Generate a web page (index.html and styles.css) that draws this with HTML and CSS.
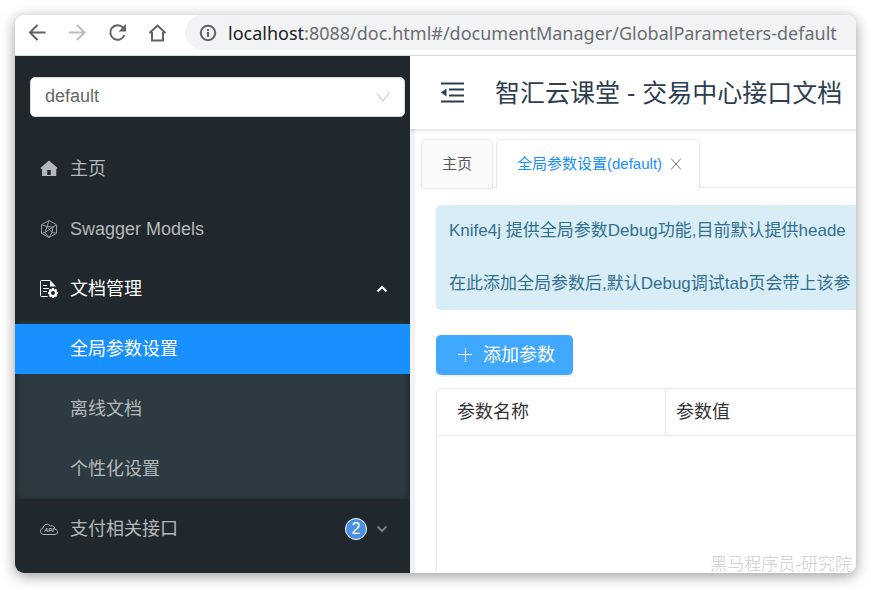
FILE: index.html
```html
<!DOCTYPE html>
<html lang="zh-CN">
<head>
<meta charset="utf-8">
<title>智汇云课堂 - 交易中心接口文档</title>
<link rel="stylesheet" href="styles.css">
</head>
<body>
<div class="window">
  <header class="browser-bar">
    <button class="nav-btn" type="button" aria-label="Back">
      <svg width="20" height="20" viewBox="0 0 20 20"><path d="M18.500 9.500H3M10.500 2L3 9.500l7.500 7.500"/></svg>
    </button>
    <button class="nav-btn nav-btn-off" type="button" aria-label="Forward" disabled>
      <svg width="20" height="20" viewBox="0 0 20 20"><path d="M2 9.500h15.500M10 2l7.500 7.500L10 17"/></svg>
    </button>
    <button class="nav-btn" type="button" aria-label="Reload">
      <svg width="20" height="20" viewBox="0 0 20 20"><path d="M17.500 12A7.300 7.300 0 1 1 16 4.500"/><path class="solid" d="M19 1v7.500h-7.500z"/></svg>
    </button>
    <button class="nav-btn" type="button" aria-label="Home">
      <svg width="20" height="20" viewBox="0 0 20 20"><path d="M2.500 10l8-7.500 8 7.500M5 9v8.500h11V9"/></svg>
    </button>
    <div class="address">
      <svg class="info" width="18" height="18" viewBox="0 0 18 18"><circle cx="9" cy="9" r="7.200"/><path d="M9 8v5M9 5v2"/></svg>
      <span class="url"><b>localhost</b>:8088/doc.html#/documentManager/GlobalParameters-default</span>
    </div>
  </header>

  <div class="app">
    <aside class="sider">
      <div class="group-select">
        <select aria-label="group"><option>default</option></select>
        <svg width="14" height="14" viewBox="0 0 14 14"><path d="M1 3l6 8 6-8"/></svg>
      </div>
      <nav>
        <ul class="menu">
          <li><a class="item" href="#home">
            <svg class="icon" width="20" height="20" viewBox="0 0 20 20"><path class="solid" fill-rule="evenodd" d="M10 1.500l8.300 7.300v1h-1V17H3V9.800H1.700v-1zM8.300 16h3.400v-5H8.300z"/></svg>
            <span>主页</span></a></li>
          <li><a class="item" href="#models">
            <svg class="icon thin" width="20" height="20" viewBox="0 0 20 20"><path d="M10 1.500l7.500 4.200v8.600L10 18.500l-7.500-4.200V5.700zM10 1.500L8 7.500 2.500 5.700M8 7.500l6 .5 3.500-2.300M14 8l-1 5.500 4.500.8M13 13.500l-3 5-4-5-3.500.8M6 13.500l2-6M6 13.500L14 8M8 7.500l5 6"/></svg>
            <span>Swagger Models</span></a></li>
          <li>
            <a class="item open" href="#docs">
              <svg class="icon" width="20" height="20" viewBox="0 0 20 20"><path d="M8.500 17.500H2.500Q1.500 17.500 1.500 16.500V2.500Q1.500 1.500 2.500 1.500H11M4 6.500h4M4 9.500h6M4 12.500h4"/><path class="solid" d="M11 1l6 6.500h-6z"/><circle cx="14" cy="14" r="3" stroke-width="2"/><path stroke-width="2" d="M14 9v2M14 17v2M9 14h2M17 14h2M10.500 10.500l1.500 1.500M16 16l1.500 1.500M17.500 10.500L16 12M12 16l-1.500 1.500"/></svg>
              <span>文档管理</span>
              <svg class="arrow" width="12" height="12" viewBox="0 0 12 12"><path d="M1.500 8.500L6 4l4.500 4.500"/></svg>
            </a>
            <ul class="submenu">
              <li><a class="item active" href="#global">全局参数设置</a></li>
              <li><a class="item" href="#offline">离线文档</a></li>
              <li><a class="item" href="#settings">个性化设置</a></li>
            </ul>
          </li>
          <li><a class="item" href="#pay">
            <svg class="icon api" width="20" height="20" viewBox="0 0 20 20"><path d="M5 15.500C.5 15.500.5 9.500 4 9.200c0-4 5.500-5.500 7.500-2 3-1 4.500 1 4.300 3 4 .6 3.500 5.300.2 5.300z"/><text x="5" y="13">API</text></svg>
            <span>支付相关接口</span>
            <span class="count">2</span>
            <svg class="arrow" width="12" height="12" viewBox="0 0 12 12"><path d="M1.500 3.500L6 8l4.500-4.500"/></svg>
          </a></li>
        </ul>
      </nav>
    </aside>

    <main class="main">
      <div class="topbar">
        <button class="fold" type="button" aria-label="Toggle menu">
          <svg width="24" height="24" viewBox="0 0 24 24"><path d="M1 2.500h23M9 8.500h15M9 14.500h15M1 20.500h23"/><path class="solid" d="M6.500 7.500v8L1 11.500z"/></svg>
        </button>
        <h1>智汇云课堂 - 交易中心接口文档</h1>
      </div>
      <div class="content">
        <div class="tabs" role="tablist">
          <button class="tab" type="button" role="tab">主页</button>
          <button class="tab current" type="button" role="tab" aria-selected="true">全局参数设置(default)
            <svg width="12" height="12" viewBox="0 0 12 12"><path d="M1 .5l10 11M11 .5l-10 11"/></svg>
          </button>
        </div>
        <div class="panel">
          <div class="notice">
            <p>Knife4j 提供全局参数Debug功能,目前默认提供heade</p>
            <p>在此添加全局参数后,默认Debug调试tab页会带上该参</p>
          </div>
          <button class="add" type="button">
            <svg width="16" height="16" viewBox="0 0 16 16"><path d="M8.500 1v14M1 7.500h14"/></svg>
            添加参数
          </button>
          <div class="table-box">
            <table>
              <thead><tr><th scope="col">参数名称</th><th scope="col">参数值</th></tr></thead>
            </table>
          </div>
        </div>
      </div>
      <div class="watermark">黑马程序员-研究院</div>
    </main>
  </div>
</div>
</body>
</html>
```
FILE: styles.css
```css
* { box-sizing: border-box; }

body {
  margin: 0;
  padding: 15px 15px 17px;
  height: 100vh;
  background: #fff;
  font: 18px/26px "Liberation Sans", "Noto Sans CJK SC", sans-serif;
}

h1, p, ul { margin: 0; padding: 0; }
ul { list-style: none; }
a { color: inherit; text-decoration: none; }
button { font: inherit; border: 0; background: none; padding: 0; cursor: pointer; }
svg { display: block; flex: none; fill: none; stroke: currentColor; }
.solid { fill: currentColor; stroke: none; }

.window {
  display: flex;
  flex-direction: column;
  height: 100%;
  border-radius: 9px;
  overflow: hidden;
  background: #fff;
  box-shadow: 0 3px 14px rgba(0, 0, 0, 0.4);
}

/* Browser toolbar */
.browser-bar {
  display: flex;
  flex: none;
  height: 41px;
  padding-left: 12px;
  padding-bottom: 5px;
  border-bottom: 1px solid #d9dadc;
  color: #5f6368;
}
.nav-btn { width: 20px; margin-right: 20px; color: #5f6368; }
.nav-btn svg { stroke-width: 2; }
.nav-btn-off { color: #bbbdc0; }
.address {
  display: flex;
  flex: 1;
  align-items: center;
  gap: 11px;
  min-width: 0;
  margin-left: -2px;
  padding-left: 14px;
  border-radius: 18px 0 0 18px;
  background: #f1f3f4;
}
.info { stroke-width: 2; }
.url { font: 18px/26px "Noto Sans", sans-serif; white-space: nowrap; color: #6b6e72; }
.url b { font-weight: 400; color: #202124; }

.app { display: flex; flex: 1; min-height: 0; }

/* Side menu */
.sider {
  flex: none;
  width: 395px;
  overflow: hidden;
  background: #20282d;
  color: #b5b8ba;
}
.group-select { display: grid; align-items: center; margin: 21px 5px 22px 15px; }
.group-select select, .group-select svg { grid-area: 1 / 1; }
.group-select select {
  appearance: none;
  width: 100%;
  height: 40px;
  padding: 0 14px 2px;
  border: 1px solid #d9d9d9;
  border-radius: 5px;
  background: #fff;
  color: #666;
  font: inherit;
}
.group-select svg { justify-self: end; margin-right: 15px; color: #bfbfbf; pointer-events: none; }

.menu li { display: flow-root; }
.item {
  display: flex;
  align-items: center;
  height: 50px;
  margin: 5px 0;
  padding: 0 22px 0 24px;
}
.icon { margin-right: 11px; stroke-width: 1; }
.thin { opacity: 0.8; }
.api text { font: italic bold 6px "Liberation Sans", sans-serif; fill: currentColor; stroke: none; }
.arrow { margin-left: auto; stroke-width: 2; }
.item .count + .arrow { margin-left: 9px; opacity: 0.6; }
.open { color: #fff; }
.count {
  width: 22px;
  height: 22px;
  margin-left: auto;
  border: 1px solid #fff;
  border-radius: 11px;
  background: #4a90e2;
  color: #fff;
  font-size: 16px;
  line-height: 20px;
  text-align: center;
}
.submenu {
  display: flow-root;
  background: #2c3b41;
  box-shadow: inset 0 2px 8px rgba(0, 0, 0, 0.45);
}
.submenu .item { padding-left: 55px; }
.submenu .active { background: #1890ff; color: #fff; }

/* Main column */
.main { display: flex; flex: 1; flex-direction: column; min-width: 0; position: relative; background: #f0f2f5; }
.topbar {
  display: flex;
  flex: none;
  align-items: center;
  gap: 31px;
  height: 73px;
  padding-left: 30px;
  background: #fff;
  color: #2c3e50;
  box-shadow: 0 2px 3px rgba(0, 21, 41, 0.12);
  z-index: 1;
}
.fold { color: #2c3e50; }
.fold svg { stroke-width: 2; }
h1 { font-size: 25px; line-height: 36px; font-weight: 400; white-space: nowrap; }
.content { flex: 1; min-height: 0; margin-left: 5px; padding: 10px 0 0 6px; overflow: hidden; background: #fff; }

.tabs { display: flex; gap: 3px; height: 49px; border-bottom: 1px solid #e8e8e8; }
.tab {
  display: flex;
  align-items: center;
  gap: 8px;
  height: 50px;
  padding: 0 20px;
  border: 1px solid #e8e8e8;
  border-radius: 5px 5px 0 0;
  background: #fafafa;
  color: #595959;
  font-size: 15px;
  white-space: nowrap;
}
.current { padding-right: 17px; border-bottom-color: #fff; background: #fff; color: #1890ff; }
.current svg { color: #777; }

.panel { padding: 17px 0 0 15px; }
.notice {
  display: grid;
  gap: 27px;
  padding: 13px 0 13px 13px;
  border-radius: 5px 0 0 5px;
  background: #d9edf7;
  color: #31708f;
  font-size: 17px;
  white-space: nowrap;
}
.add {
  display: flex;
  align-items: center;
  gap: 10px;
  height: 40px;
  margin: 25px 0 13px;
  padding: 0 18px 0 21px;
  border-radius: 5px;
  background: #40a9ff;
  color: #fff;
  box-shadow: 0 2px 1px rgba(0, 0, 0, 0.05);
}
.add svg { stroke-width: 1; }
.table-box {
  height: 100vh;
  border: 1px solid #e8e8e8;
  border-width: 1px 0 0 1px;
  border-radius: 5px 0 0 0;
}
table { width: 100%; border-spacing: 0; table-layout: fixed; }
th {
  height: 47px;
  padding: 0 10px;
  border-bottom: 1px solid #e8e8e8;
  color: #333;
  font-weight: 400;
  text-align: left;
}
th:first-child { width: 229px; padding-left: 20px; border-right: 1px solid #e8e8e8; }

.watermark {
  position: absolute;
  right: 4px;
  bottom: 0;
  color: #ccc;
  font-size: 17px;
  line-height: 17px;
  font-weight: 300;
}
```
